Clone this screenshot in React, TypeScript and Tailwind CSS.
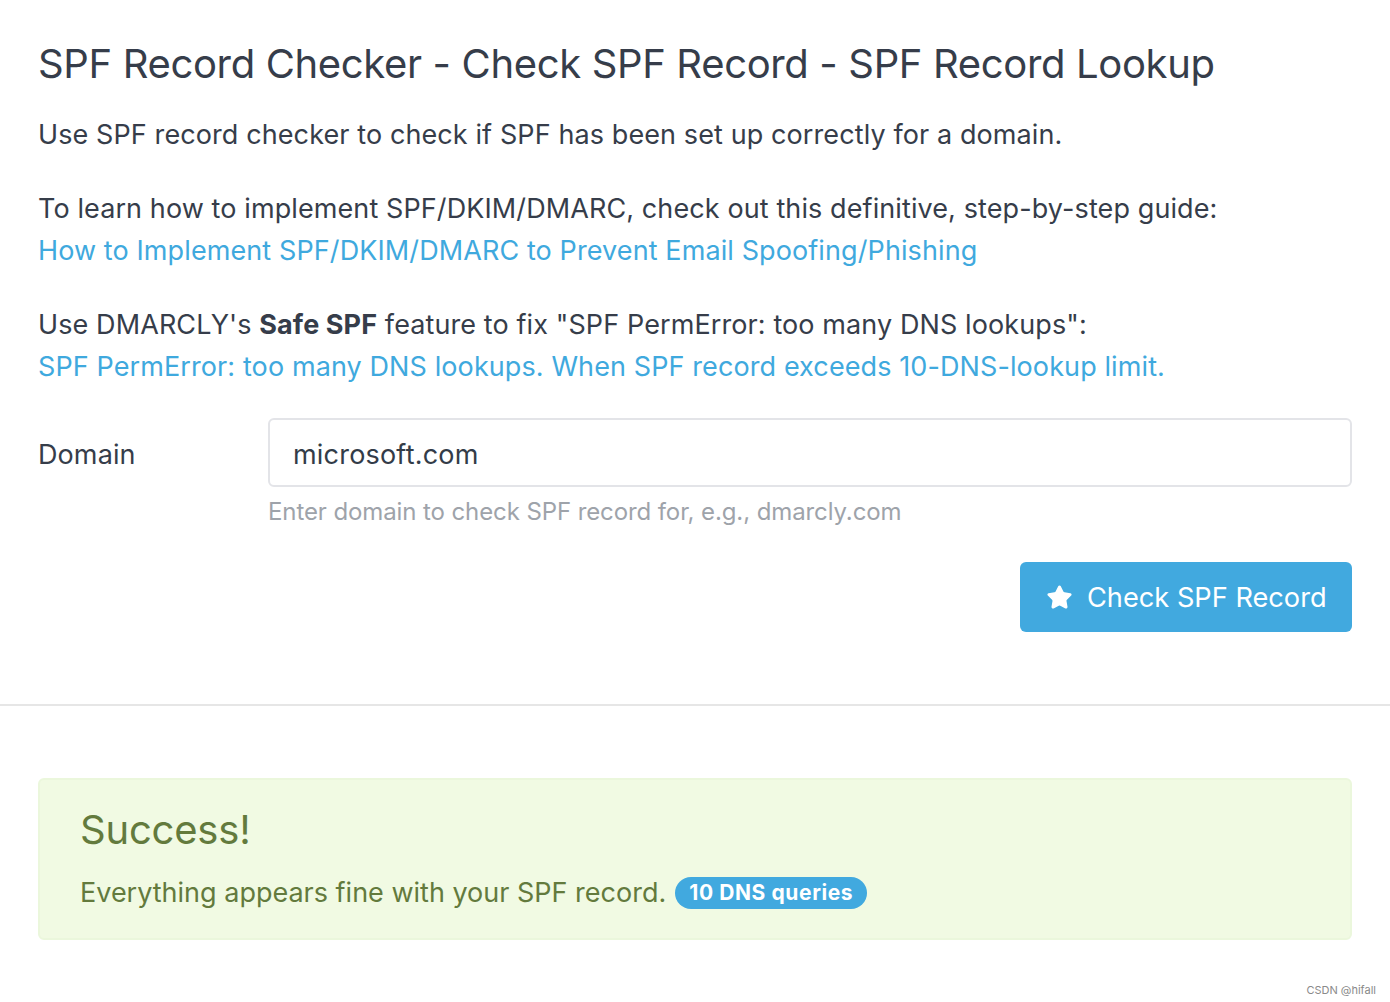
import { Star } from 'lucide-react'

const font = { fontFamily: 'Inter, "Noto Sans", sans-serif' }

export default function App() {
  return (
    <div className="min-h-[1002px] bg-white text-[#363d4a]" style={font}>
      <div className="px-[38px] pt-[38px]">
        <h1 className="text-[40px] leading-[52px] font-normal tracking-[-0.35px]">
          SPF Record Checker - Check SPF Record - SPF Record Lookup
        </h1>
        <p className="mt-[24px] text-[27px] leading-[42px] tracking-[0.1px]">
          Use SPF record checker to check if SPF has been set up correctly for a domain.
        </p>
        <p className="mt-[32px] text-[27px] leading-[42px] tracking-[0.1px]">
          To learn how to implement SPF/DKIM/DMARC, check out this definitive, step-by-step guide:
          <br />
          <a className="text-[#3fa9de]">How to Implement SPF/DKIM/DMARC to Prevent Email Spoofing/Phishing</a>
        </p>
        <p className="mt-[32px] text-[27px] leading-[42px] tracking-[0.1px]">
          Use DMARCLY's <b className="font-bold">Safe SPF</b> feature to fix "SPF PermError: too many DNS lookups":
          <br />
          <a className="text-[#3fa9de]">
            SPF PermError: too many DNS lookups. When SPF record exceeds 10-DNS-lookup limit.
          </a>
        </p>

        <div className="mt-[30px] grid grid-cols-[230px_1fr]">
          <label className="flex h-[68px] items-center pt-[6px] text-[27px] tracking-[0.1px]">Domain</label>
          <div>
            <div className="flex h-[69px] items-center rounded-[6px] border-2 border-[#e3e4e8] px-[23px] pt-[5px] text-[27px] tracking-[0.2px] text-[#333c48]">
              microsoft.com
            </div>
            <p className="mt-[8px] text-[24px] leading-[34px] tracking-[-0.1px] text-[#9ea3aa]">
              Enter domain to check SPF record for, e.g., dmarcly.com
            </p>
          </div>
        </div>

        <div className="mt-[33px] flex justify-end">
          <button className="flex h-[70px] w-[332px] items-center gap-[14px] rounded-[6px] bg-[#41a9df] pl-[26px] pt-[3px] text-[27.2px] text-white">
            <Star className="-mt-[3px] h-[27px] w-[27px]" fill="white" strokeWidth={1.5} />
            Check SPF Record
          </button>
        </div>
      </div>

      <div className="mt-[72px] h-[2px] bg-[#e6e6e6]" />

      <div className="px-[38px] pt-[72px]">
        <div className="rounded-[6px] border-2 border-[#ebf7dc] bg-[#f1fae3] px-[40px] pt-[25px] pb-[25px] text-[#637a3d]">
          <h2 className="text-[40px] leading-[50px] tracking-[-0.2px]">Success!</h2>
          <p className="mt-[18px] flex items-center text-[27px] leading-[40px]">
            Everything appears fine with your SPF record.
            <span className="ml-[9px] inline-flex h-[32px] items-center rounded-full bg-[#41a9df] px-[14px] text-[21px] font-bold tracking-[0.6px] text-white">
              10 DNS queries
            </span>
          </p>
        </div>
      </div>

      <div className="flex justify-end px-[14px] pt-[42px] text-[11px] text-[#8a8a8a]">CSDN @hifall</div>
    </div>
  )
}
